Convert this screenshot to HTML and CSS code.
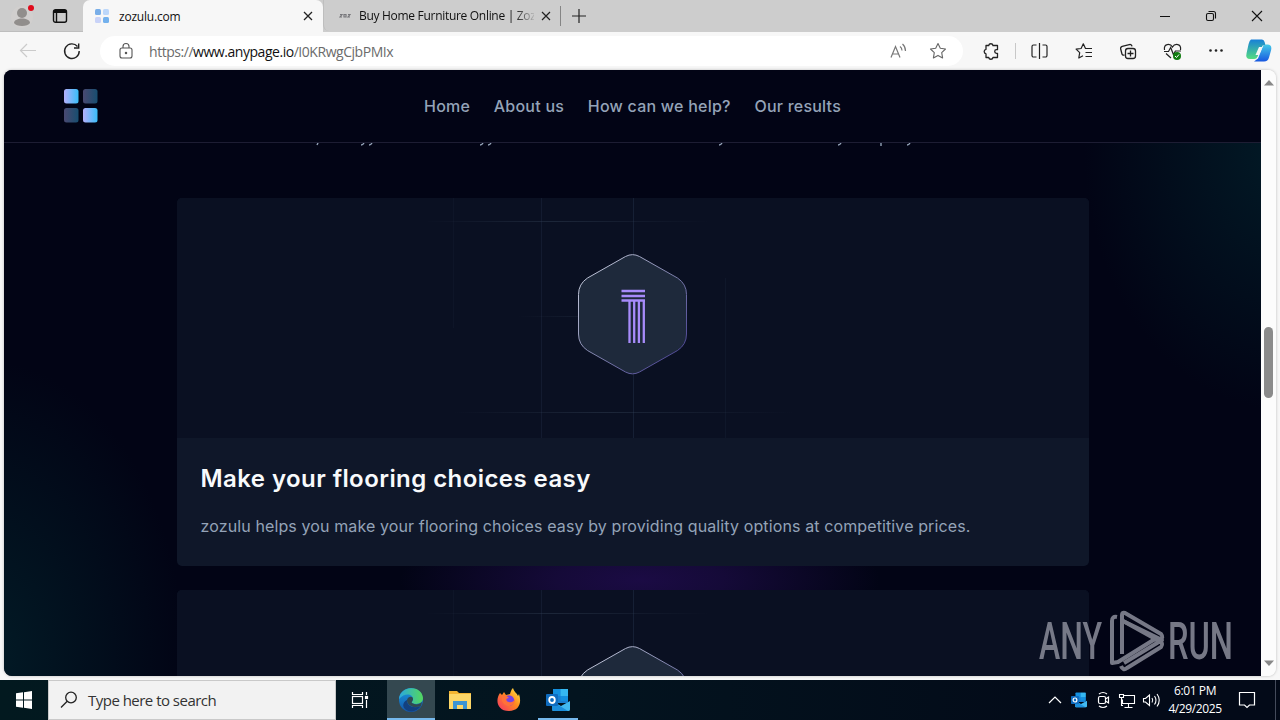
FILE: index.html
```html
<!DOCTYPE html>
<html lang="en">
<head>
    <meta charset="UTF-8">
    <meta name="viewport" content="width=device-width, initial-scale=1.0">
    <title>zozulu.com</title>
    <link rel="stylesheet" href="styles.css">
</head>
<body>
    <!-- shared gradients and symbols -->
    <svg class="defs" width="0" height="0">
        <defs>
            <linearGradient id="logoGrad" x1="0" x2="1"><stop offset="0" stop-color="#b4b0fb"/><stop offset="1" stop-color="#38bdf8"/></linearGradient>
            <linearGradient id="hexGrad" x1="0" y1="0" x2="1" y2="1"><stop offset="0" stop-color="#d5dbe6"/><stop offset=".5" stop-color="#8083ad"/><stop offset="1" stop-color="#40368f"/></linearGradient>
            <linearGradient id="fadeX"><stop offset="0" stop-color="#334155" stop-opacity="0"/><stop offset=".45" stop-color="#334155" stop-opacity=".45"/><stop offset="1" stop-color="#334155" stop-opacity="0"/></linearGradient>
            <linearGradient id="cpA" x1="0" y1="0" x2="0" y2="1"><stop offset="0" stop-color="#1780d8"/><stop offset="1" stop-color="#55dc80"/></linearGradient>
            <linearGradient id="cpB" x1="0" y1="0" x2="0" y2="1"><stop offset="0" stop-color="#45cbe8"/><stop offset="1" stop-color="#1757e0"/></linearGradient>
            <linearGradient id="edgeA" x1="0" y1="0" x2="1" y2="0"><stop offset="0" stop-color="#2aa8e0"/><stop offset="1" stop-color="#54d85c"/></linearGradient>
            <linearGradient id="edgeB" x1="0" y1="0" x2="0" y2="1"><stop offset="0" stop-color="#199ae0"/><stop offset="1" stop-color="#1455a8"/></linearGradient>
            <linearGradient id="foxGrad" x1="1" y1="0" x2="0" y2="1"><stop offset="0" stop-color="#fff04a"/><stop offset=".45" stop-color="#ff8a1e"/><stop offset="1" stop-color="#f5306a"/></linearGradient>
            <symbol id="outlook" viewBox="0 0 24 22">
                <rect x="7" y="0" width="15" height="14" rx="1" fill="#1a7fd0"/>
                <rect x="7" y="0" width="7.5" height="7" fill="#1490df"/><rect x="14.5" y="0" width="7.5" height="7" fill="#35b8f1"/>
                <rect x="14.5" y="7" width="7.5" height="5" fill="#1490df"/>
                <path d="M6 12l9 5 9-5v8.500a1.500 1.500 0 0 1-1.500 1.500h-15A1.500 1.500 0 0 1 6 20.500z" fill="#42baf0"/>
                <path d="M6 12v8.500L7.500 22H22z" fill="#1c8fdc"/>
                <rect x="0" y="5" width="12" height="12" rx="1" fill="#0f6cbf"/>
                <ellipse cx="6" cy="11" rx="2.800" ry="3" fill="none" stroke="#fff" stroke-width="1.800"/>
            </symbol>
        </defs>
    </svg>

    <div class="tab-strip">
        <div class="strip-left">
            <svg width="30" height="32" viewBox="0 0 30 32"><circle cx="15" cy="17" r="11" fill="#d1cfce"/><circle cx="15" cy="13" r="5" fill="#918e8c"/><path d="M7 23c0-6 16-6 16 0-2 4-14 4-16 0z" fill="#918e8c"/><circle cx="24" cy="8" r="3" fill="#e00b1c"/></svg>
            <svg width="16" height="16" viewBox="0 0 16 16" fill="none" stroke="#111" stroke-width="1.400"><rect x="1.500" y="1.700" width="13" height="12.600" rx="2"/><path d="M2 3.500h12" stroke-width="3"/><path d="M4.500 4v10"/></svg>
        </div>
        <div class="tab active">
            <svg width="14" height="14" viewBox="0 0 14 14"><rect width="6" height="6" rx="1.500" fill="#79aee8"/><rect x="8" width="6" height="6" rx="1.500" fill="#bcd7fa"/><rect y="8" width="6" height="6" rx="1.500" fill="#c9d3f8"/><rect x="8" y="8" width="6" height="6" rx="1.500" fill="#73b1ed"/></svg>
            <span class="tab-title first">zozulu.com</span>
            <svg width="10" height="10" viewBox="0 0 10 10" stroke="#222" stroke-width="1.300"><path d="M1 1l8 8M9 1l-8 8"/></svg>
        </div>
        <div class="tab inactive">
            <svg width="12" height="6" viewBox="0 0 12 6" fill="none" stroke="#77777b" stroke-width="1.200"><path d="M1 1.500h2L1 4h2M5 1.500h2v2.500H5zM9 1.500h2L9 4h2"/></svg>
            <span class="tab-title second">Buy Home Furniture Online | Zoz</span>
            <svg width="10" height="10" viewBox="0 0 10 10" stroke="#222" stroke-width="1.200"><path d="M1 1l8 8M9 1l-8 8"/></svg>
        </div>
        <svg class="new-tab" width="14" height="14" viewBox="0 0 14 14" stroke="#222" stroke-width="1.200"><path d="M7 0v14M0 7h14"/></svg>
        <div class="window-buttons">
            <svg width="46" height="32" viewBox="0 0 46 32"><path d="M18 16.500h10" stroke="#111"/></svg>
            <svg width="46" height="32" viewBox="0 0 46 32" fill="none" stroke="#111" stroke-width="1.100"><rect x="18.500" y="13.500" width="7" height="7" rx="1.500"/><path d="M20.500 11.500h5a2 2 0 0 1 2 2v5"/></svg>
            <svg width="46" height="32" viewBox="0 0 46 32" stroke="#111" stroke-width="1.100"><path d="M18 11l10 10M28 11L18 21"/></svg>
        </div>
    </div>

    <div class="toolbar">
        <svg width="56" height="38" viewBox="0 0 56 38" fill="none" stroke="#cbcbcb" stroke-width="1.200"><path d="M36 18.500H20.500M27 12l-6.500 6.500L27 25"/></svg>
        <svg width="44" height="38" viewBox="0 0 44 38" fill="none" stroke="#222" stroke-width="1.400"><path d="M21.500 14.500a7.300 7.300 0 1 0 1.700 4.500M22.700 11.500v4.500H18"/></svg>
        <div class="address">
            <svg width="16" height="18" viewBox="0 0 16 18" fill="none" stroke="#555" stroke-width="1.100"><rect x="2" y="6" width="12" height="10" rx="2"/><path d="M5 6V4.500a3 3 0 0 1 6 0V6"/><circle cx="8" cy="11" r=".7" fill="#555"/></svg>
            <div class="url">https://<b>www.anypage.io</b>/I0KRwgCjbPMIx</div>
            <svg width="18" height="16" viewBox="0 0 18 16" fill="none" stroke="#777" stroke-width="1.200"><path d="M2 14.500L6.500 3.500l4.500 11M3.500 11h6M11 3.500q2 1.500 2 4M13.500 1q3 2.500 3 7"/></svg>
            <svg class="star" width="18" height="18" viewBox="0 0 18 18" fill="none" stroke="#666" stroke-width="1.100" stroke-linejoin="round"><path d="M9 1.500l2.300 4.800 5.200.7-3.800 3.600.9 5.300L9 13.400l-4.600 2.500.9-5.300L1.500 7l5.200-.7z"/></svg>
        </div>
        <div class="actions">
            <svg viewBox="0 0 44 38" fill="none" stroke="#222" stroke-width="1.300" stroke-linejoin="round"><path d="M17 13.500h2.700a2.200 2.200 0 0 1 4.300 0h4.500v4.200h-1a1.800 1.800 0 0 0 0 3.600h1v4.200h-4.500a2.200 2.200 0 0 1-4.300 0H17v-3.700a2.300 2.300 0 0 1 0-4.500z"/></svg>
            <span class="divider"></span>
            <svg viewBox="0 0 44 38" fill="none" stroke="#222" stroke-width="1.200"><path d="M22.500 11v16M19.500 13h-3a1.500 1.500 0 0 0-1.500 1.500v9a1.500 1.500 0 0 0 1.500 1.500h3M25.500 13h3a1.500 1.500 0 0 1 1.500 1.500v9a1.500 1.500 0 0 1-1.500 1.500h-3"/></svg>
            <svg viewBox="0 0 44 38" fill="none" stroke="#222" stroke-width="1.200" stroke-linejoin="round"><path d="M31 16.500h-6.500l-2.200-4.700-2.200 4.700-5 .6 3.600 3.600-.9 5.300 4.200-2.300M24.500 20.500H31M24.500 24.500H31"/></svg>
            <svg viewBox="0 0 44 38" fill="none" stroke="#222" stroke-width="1.300"><path d="M19.500 23c-2 .5-2.500-.5-2.800-2l-1-4c-.3-1.500.2-2.200 1.500-2.600l7-1.800c1.500-.3 2.500 0 2.800 1.800"/><rect x="20.500" y="16.500" width="10" height="10" rx="2.500"/><path d="M25.500 18.500v6M22.500 21.500h6"/></svg>
            <svg viewBox="0 0 44 38" fill="none" stroke="#222" stroke-width="1.200"><path d="M15.500 18c-1.300-7 6-6.500 8-3 2-3.500 9.300-4 8 3M15 19.500h4.500l2.200-4 2.700 7 2-3.500H32M17 21.500l5 4.500"/><circle cx="28" cy="24" r="4" fill="#107c10" stroke="none"/><path d="M26 24l1.500 1.500 2.500-3" stroke="#fff" stroke-width="1"/></svg>
            <svg viewBox="0 0 44 38" fill="#222"><circle cx="17.500" cy="18.500" r="1.300"/><circle cx="23" cy="18.500" r="1.300"/><circle cx="28.500" cy="18.500" r="1.300"/></svg>
            <svg class="copilot" viewBox="0 0 42 38"><path d="M14 7.500h11q2 0 2.600 2.500l1 3.500h-3l-5 11q-1 2.500-3.500 2.500h-4q-5 0-3.500-6l2-9q1-4 2.400-4.500z" fill="url(#cpA)"/><path d="M27 29.500H17l4-3 4.500-11q1-3 4-3h1q5 0 3.500 6l-2 7q-1 4-5 4z" fill="url(#cpB)"/><path d="M22 15h3.500L22 23h-3.500z" fill="#f7f7f7"/></svg>
        </div>
    </div>

    <div class="viewport">
        <div class="site">
            <header>
                <svg class="logo" width="34" height="34" viewBox="0 0 34 34" fill="url(#logoGrad)"><rect width="14.500" height="14.500" rx="2.500"/><rect x="19" width="14.500" height="14.500" rx="2.500" opacity=".4"/><rect y="19" width="14.500" height="14.500" rx="2.500" opacity=".4"/><rect x="19" y="19" width="14.500" height="14.500" rx="2.500"/></svg>
                <nav>
                    <a>Home</a>
                    <a>About us</a>
                    <a>How can we help?</a>
                    <a>Our results</a>
                </nav>
            </header>
            <main>
                <!-- tails of the intro line that scrolls under the header -->
                <svg class="intro-tail" width="912" height="4" viewBox="0 0 912 4" fill="none" stroke="#94a3b8" stroke-width="1.400"><path d="M141 0l-1 2M187 0q-1 2-3 2M195 0q-1 2-3 2M306 0q-1 2-3 2M314 0q-1 2-3 2M545 0q-1 2-3 2M664 0q-1 2-3 2M704 0v3M733 0q-1 2-3 2"/></svg>
                <article class="card">
                    <svg class="art" width="912" height="240" viewBox="0 0 912 240">
                        <g fill="#1e2b42">
                            <rect x="276" width="1" height="130" opacity=".2"/>
                            <rect x="364" width="1" height="240" opacity=".45"/>
                            <rect x="456" width="1" height="240" opacity=".6"/>
                            <rect x="548" y="80" width="1" height="160" opacity=".25"/>
                        </g>
                        <g fill="url(#fadeX)">
                            <rect x="248" y="23" width="284" height="1"/>
                            <rect x="340" y="118" width="120" height="1" opacity=".5"/>
                            <rect x="276" y="214" width="340" height="1"/>
                        </g>
                        <path d="M448.500 58.500Q455.500 54.800 462.500 58.500L500.500 80Q509.500 86 509.500 96.500V136Q509.500 146.500 500.500 152.500L462.500 174Q455.500 177.700 448.500 174L410.500 152.500Q401.500 146.500 401.500 136V96.500Q401.500 86 410.500 80Z" fill="#1e293b" stroke="url(#hexGrad)"/>
                        <path d="M444.500 93h23.500M444.500 98h23.500M444.500 102.500h23.500M452.500 102v43M457.200 102v43M461.900 102v43M466.800 102v43" stroke="#a78bfa" stroke-width="2.300"/>
                    </svg>
                    <div class="card-body">
                        <h2>Make your flooring choices easy</h2>
                        <p>zozulu helps you make your flooring choices easy by providing quality options at competitive prices.</p>
                    </div>
                </article>
                <article class="card">
                    <svg class="art" width="912" height="240" viewBox="0 0 912 240">
                        <g fill="#1e2b42">
                            <rect x="276" width="1" height="130" opacity=".2"/>
                            <rect x="364" width="1" height="240" opacity=".45"/>
                            <rect x="456" width="1" height="240" opacity=".6"/>
                        </g>
                        <rect x="248" y="23" width="284" height="1" fill="url(#fadeX)"/>
                        <path d="M448.500 58.500Q455.500 54.800 462.500 58.500L500.500 80Q509.500 86 509.500 96.500V136Q509.500 146.500 500.500 152.500L462.500 174Q455.500 177.700 448.500 174L410.500 152.500Q401.500 146.500 401.500 136V96.500Q401.500 86 410.500 80Z" fill="#1e293b" stroke="url(#hexGrad)"/>
                    </svg>
                </article>
            </main>
        </div>
        <div class="scrollbar">
            <svg width="10" height="6" viewBox="0 0 10 6"><path d="M0 5.500L5 0l5 5.500z" fill="#888"/></svg>
            <div class="thumb"></div>
            <svg width="10" height="6" viewBox="0 0 10 6"><path d="M0 .5L5 6l5-5.500z" fill="#888"/></svg>
        </div>
    </div>

    <svg class="watermark" width="210" height="64" viewBox="0 0 210 64">
        <g class="watermark-text">
            <text x="3" y="50" textLength="63" lengthAdjust="spacingAndGlyphs">ANY</text>
            <text x="132" y="50" textLength="65" lengthAdjust="spacingAndGlyphs">RUN</text>
        </g>
        <g fill="none" stroke="#8b8d9a" stroke-width="4" stroke-linejoin="round">
            <path d="M81 8q-5-1-5 4v42l6-1 37-23"/>
            <path d="M86 45V6q0-3 3-2l36 21q3 4-1 5l-37-18"/>
            <path d="M115 30l11 1-38 23M85 57q2 5 6 2l34-21q3-4-2-6L87 12"/>
        </g>
    </svg>

    <div class="taskbar">
        <svg width="48" height="40" viewBox="0 0 48 40" fill="#fff"><path d="M16 13.300l7-1v7.200h-7zM24 12.200l8-1.200v8.500h-8zM16 20.500h7v7.200l-7-1zM24 20.500h8V29l-8-1.200z"/></svg>
        <div class="search">
            <svg width="18" height="18" viewBox="0 0 18 18" fill="none" stroke="#222" stroke-width="1.300"><circle cx="11" cy="6.500" r="5.300"/><path d="M7.200 10.300L1 16.500"/></svg>
            <span>Type here to search</span>
        </div>
        <div class="apps">
            <svg viewBox="0 0 48 40" fill="none" stroke="#fff" stroke-width="1.200"><path d="M14.500 12v2.500h10V12M14.500 28v-2.500h10V28"/><rect x="14.500" y="16.500" width="10" height="7"/><path d="M28.500 12v3M28.500 20v8"/><rect x="27.500" y="16.500" width="2" height="2" fill="#fff"/></svg>
            <svg class="open current" viewBox="0 0 48 40"><circle cx="24" cy="20" r="12" fill="url(#edgeB)"/><path d="M12 19C13 5 35 5 36 18c0 6-7 7-11 5-1-1 1-2 1-4 0-5-8-7-14 0z" fill="url(#edgeA)"/><path d="M20 20c0 6 6 9 14 6-4 6-12 7-16 3-3-3-2-7 2-9z" fill="#13407f"/><path d="M26 19c0 2-2 3-1 4 3 2 7 2 10-1l-1 4c-8 3-14-1-14-6 1-4 6-4 6-1z" fill="#314950"/></svg>
            <svg viewBox="0 0 48 40"><path d="M13 11h8l2 2h12v16H13z" fill="#f3b431"/><rect x="13" y="14" width="22" height="15" fill="#fcd667"/><path d="M17 29v-8h14v8h-4v-4h-6v4z" fill="#3c94d3"/></svg>
            <svg viewBox="0 0 48 40"><path d="M15 13l2 2 2-3 2 3 4-1c1-3 1-4 3-6 1 4 4 5 5 8l1-2c3 9 0 17-10 17-12 0-14-11-9-18z" fill="url(#foxGrad)"/><circle cx="24" cy="20.500" r="5.200" fill="#7542e5"/><path d="M17 16c3-1 5 0 7 2-4 0-3 4 0 4 3 1 5-1 6-3 0 5-3 7-7 7-4-1-7-4-6-10z" fill="#ff7139"/></svg>
            <svg class="open" viewBox="0 0 48 40"><use href="#outlook" x="12" y="9" width="24" height="22"/></svg>
        </div>
        <div class="tray">
            <svg viewBox="0 0 24 40" fill="none" stroke="#fff" stroke-width="1.200"><path d="M6 23l6-6 6 6"/></svg>
            <svg viewBox="0 0 24 40"><use href="#outlook" x="4" y="12" width="16" height="16"/></svg>
            <svg viewBox="0 0 24 40" fill="none" stroke="#fff" stroke-width="1.200"><rect x="7.500" y="16.500" width="7" height="7" rx="1.500"/><path d="M14.500 19l3-2v6l-3-2M8 14q4-3 8 0M8 26q4 3 8 0"/></svg>
            <svg viewBox="0 0 24 40" fill="none" stroke="#fff" stroke-width="1.100"><path d="M9 15.500h10.500v8h-12v-4M13.500 24v3M9.500 27.500h8M4.500 14.500h4v3h-4zM6.500 18v7.500H8"/></svg>
            <svg viewBox="0 0 24 40" fill="none" stroke="#fff" stroke-width="1.100"><path d="M4.500 18.500h2l4-3.500v10.500l-4-3.500h-2zM13 18q1.500 2.200 0 4.500M15.500 16q3 4.200 0 8.500M18 14q4.500 6 0 12.500"/></svg>
            <div class="clock"><span>6:01 PM</span><span>4/29/2025</span></div>
            <svg class="notes" viewBox="0 0 40 40" fill="none" stroke="#fff" stroke-width="1.200"><path d="M12.500 12.500h15v12.500h-5l-2.500 2.500-2.500-2.500h-5z"/></svg>
        </div>
    </div>
</body>
</html>
```
FILE: styles.css
```css
* {
    box-sizing: border-box;
}
body {
    margin: 0;
    width: 1280px;
    height: 720px;
    overflow: hidden;
    display: flex;
    flex-direction: column;
    background-color: #f7f7f7;
    font-family: "Open Sans", "Noto Sans", sans-serif;
    font-size: 12px;
}
svg {
    display: block;
    flex-shrink: 0;
}
.defs {
    position: absolute;
}

/* browser chrome */
.tab-strip {
    display: flex;
    align-items: stretch;
    height: 32px;
    flex-shrink: 0;
    background-color: #cdcdcd;
}
.strip-left {
    display: flex;
    align-items: center;
    gap: 15px;
    width: 83px;
    padding-left: 7px;
    border-bottom: 1px solid #bebebe;
}
.tab {
    display: flex;
    align-items: center;
    height: 32px;
}
.tab.active {
    width: 240px;
    padding-left: 12px;
    background-color: #f7f7f7;
    border-radius: 7px 7px 0 0;
}
.tab.inactive {
    width: 239px;
    height: 31px;
    padding-left: 15px;
    border-left: 1px solid #bebebe;
    border-radius: 0 0 0 6px;
}
.tab.inactive::after {
    content: "";
    width: 1px;
    height: 20px;
    margin-left: 9px;
    background-color: #858585;
}
.tab-title {
    white-space: nowrap;
    color: #111;
}
.tab-title.first {
    width: 184px;
    margin-left: 10px;
    letter-spacing: -0.2px;
}
.tab-title.second {
    width: 175px;
    margin-left: 8px;
    margin-right: 7px;
    letter-spacing: -0.3px;
    -webkit-mask-image: linear-gradient(90deg, #000 155px, transparent 178px);
    mask-image: linear-gradient(90deg, #000 155px, transparent 178px);
}
.new-tab {
    align-self: center;
    margin-left: 10px;
}
.window-buttons {
    display: flex;
    margin-left: auto;
}
.toolbar {
    display: flex;
    align-items: center;
    height: 38px;
    flex-shrink: 0;
}
.address {
    display: flex;
    align-items: center;
    width: 863px;
    height: 30px;
    padding: 0 16px 0 18px;
    background-color: #fff;
    border-radius: 15px;
}
.url {
    flex: 1;
    padding-left: 15px;
    color: #6b6b6b;
    font-size: 14px;
    letter-spacing: -0.46px;
}
.url b {
    color: #111;
    font-weight: 400;
}
.star {
    margin-left: 22px;
}
.actions {
    display: flex;
    align-items: center;
    margin-left: 6px;
}
.actions svg {
    width: 44px;
    height: 38px;
}
.actions .copilot {
    width: 42px;
}
.divider {
    width: 1px;
    height: 16px;
    margin: 0 1px 0 2px;
    background-color: #c8c8c8;
}

/* page */
.viewport {
    display: flex;
    width: 1272px;
    height: 606px;
    flex-shrink: 0;
    margin-left: 4px;
    border-radius: 8px;
    overflow: hidden;
    box-shadow: 0 0 3px rgba(0, 0, 0, 0.25);
}
.site {
    width: 1257px;
    overflow: hidden;
    background:
        radial-gradient(ellipse 240px 70px at 636px 510px, #1b0b44 0%, #150a38 35%, transparent 100%),
        radial-gradient(ellipse 200px 260px at 1280px 80px, #021a26, transparent),
        radial-gradient(ellipse 200px 300px at -20px 590px, #021b26, transparent),
        #020415;
    font-family: Inter, sans-serif;
}
header {
    display: flex;
    align-items: center;
    height: 73px;
    padding-left: 60px;
    border-bottom: 1px solid #1d1d33;
    background-color: #020415;
}
nav {
    display: flex;
    justify-content: space-between;
    width: 417px;
    margin-left: 326px;
    color: #94a3b8;
    font-size: 16px;
    font-weight: 500;
    letter-spacing: 0.23px;
    white-space: nowrap;
}
main {
    display: flex;
    flex-direction: column;
    align-items: center;
}
.intro-tail {
    margin-bottom: 51px;
}
.card {
    width: 912px;
    height: 368px;
    flex-shrink: 0;
    margin-bottom: 24px;
    border-radius: 5px;
    overflow: hidden;
    background-color: #0f1729;
}
.art {
    background-color: #0a1022;
}
.card-body {
    padding: 25px 24px 24px;
}
.card-body h2 {
    margin: 0;
    color: #f8fafc;
    font-size: 24px;
    line-height: 32px;
    font-weight: 600;
    letter-spacing: 0.43px;
}
.card-body p {
    margin: 19px 0 0;
    color: #94a3b8;
    font-size: 16px;
    line-height: 24px;
    letter-spacing: 0.115px;
    white-space: nowrap;
}
.scrollbar {
    display: flex;
    flex-direction: column;
    align-items: center;
    width: 15px;
    padding: 10px 0;
    background-color: #fcfcfc;
}
.thumb {
    width: 9px;
    height: 71px;
    margin: 241px 0 auto;
    border-radius: 5px;
    background-color: #8b8b8b;
}
.watermark {
    position: absolute;
    left: 1036px;
    top: 609px;
    opacity: 0.85;
}
.watermark-text {
    fill: #8b8d9a;
    font-family: Roboto, sans-serif;
    font-size: 51px;
    font-weight: 500;
}

/* taskbar */
.taskbar {
    display: flex;
    height: 40px;
    flex-shrink: 0;
    margin-top: 4px;
    background: linear-gradient(90deg, #02191f, #03141f 45%, #030a18 85%);
    color: #fff;
}
.search {
    display: flex;
    align-items: center;
    width: 288px;
    padding-left: 11px;
    border: 1px solid #c9c9c9;
    background-color: #f2f2f2;
    color: #333;
    font-size: 15px;
}
.search span {
    margin-left: 10px;
    letter-spacing: -0.52px;
}
.apps {
    display: flex;
    gap: 1px;
    padding-left: 2px;
}
.apps svg {
    width: 48px;
    height: 40px;
}
.apps .open {
    background: linear-gradient(#76b9ed, #76b9ed) center bottom / 40px 2px no-repeat;
}
.apps .current {
    background: linear-gradient(#76b9ed, #76b9ed) center bottom / 48px 2px no-repeat, #344850;
}
.tray {
    display: flex;
    margin-left: auto;
    margin-right: 4px;
    padding-right: 8px;
    border-right: 1px solid #444b5b;
}
.tray svg {
    width: 24px;
    height: 40px;
}
.tray .notes {
    width: 40px;
}
.clock {
    display: flex;
    flex-direction: column;
    align-items: center;
    width: 64px;
    padding-top: 2px;
    line-height: 18px;
    letter-spacing: -0.4px;
}
```
